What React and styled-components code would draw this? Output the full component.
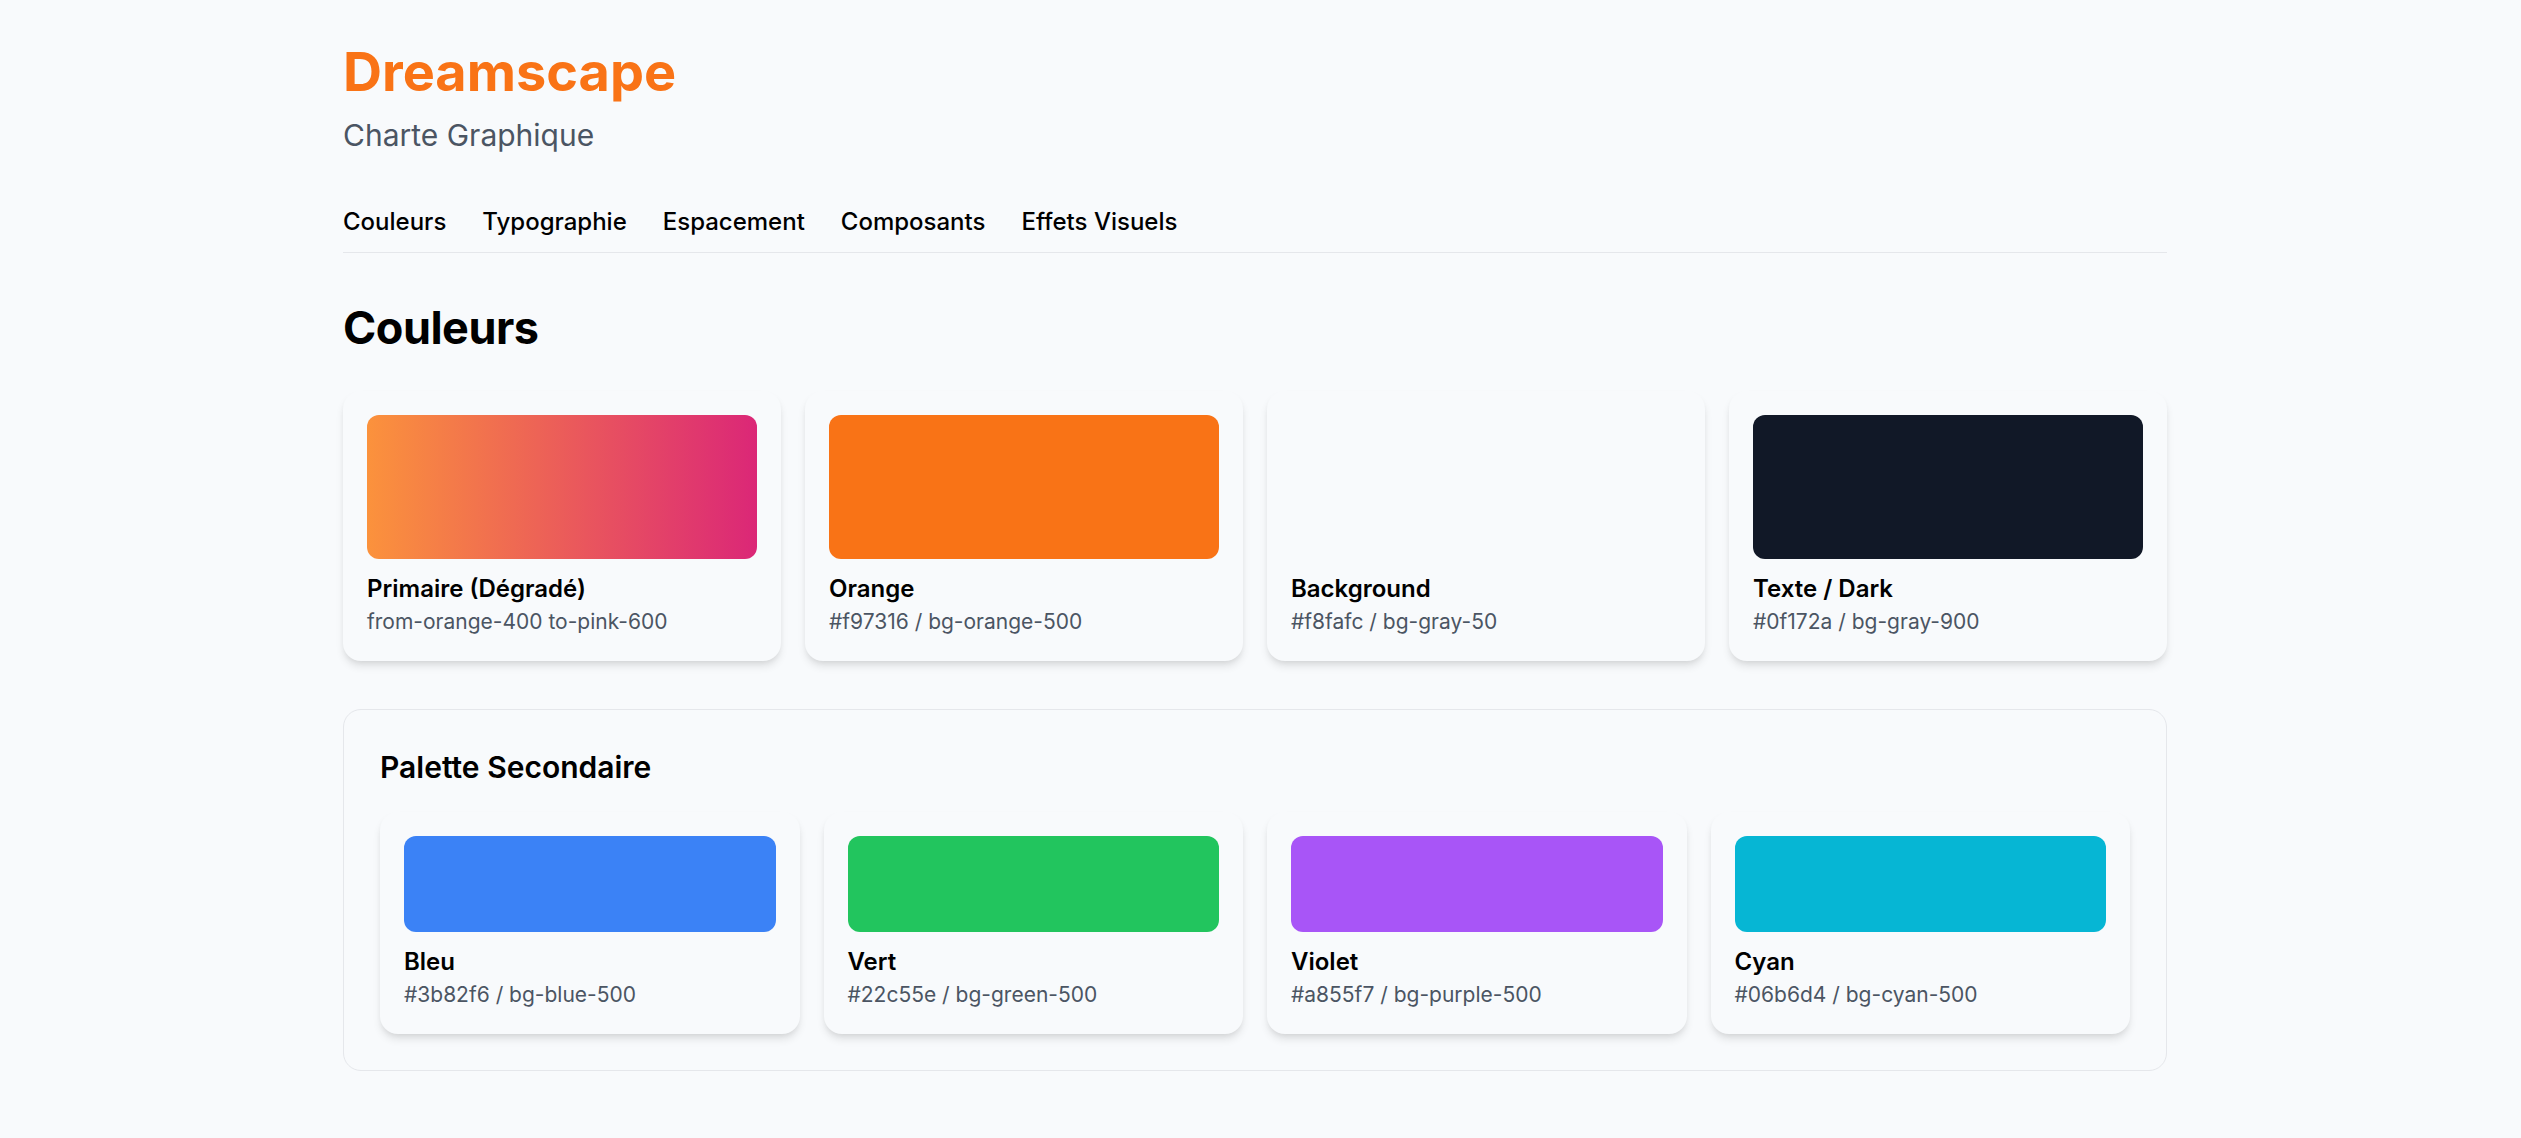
import React from 'react'
import styled, { createGlobalStyle } from 'styled-components'

const GlobalStyle = createGlobalStyle`
  body { margin: 0; background: #f8fafc; font-family: Inter, "Noto Sans", sans-serif; color: #0b0b0f; }
  * { box-sizing: border-box; }
`

const Page = styled.div`min-height: 1138px; padding: 42px 11px 60px 0;`
const Container = styled.div`width: 1824px; margin: 0 auto;`

const Header = styled.header`margin-bottom: 48px;`
const Brand = styled.h1`margin: 0; font-size: 54px; line-height: 60px; font-weight: 700; color: #f97316;`
const Subtitle = styled.p`margin: 12px 0 0; font-size: 30px; line-height: 42px; color: #4b5563;`

const Nav = styled.nav`display: flex; gap: 36px; padding-bottom: 12px; border-bottom: 1.5px solid #e5e7eb;`
const NavItem = styled.a`font-size: 24px; line-height: 36px; font-weight: 500; color: #000; text-decoration: none; cursor: pointer;`

const Section = styled.section`margin-top: 48px;`
const SectionTitle = styled.h2`margin: 0 0 36px; font-size: 45px; line-height: 54px; font-weight: 700; letter-spacing: -0.5px; color: #000;`

const Grid = styled.div`display: grid; grid-template-columns: repeat(4, 1fr); gap: 24px;`

const Card = styled.div`
  background: #f8fafc; border-radius: 18px; padding: 24px;
  box-shadow: 0 6px 9px -1.5px rgba(0,0,0,0.1), 0 3px 6px -3px rgba(0,0,0,0.1);
`
const Swatch = styled.div`height: ${p => p.$h}px; border-radius: 12px; background: ${p => p.$bg}; margin-bottom: 12px;`
const Label = styled.div`font-size: 24px; line-height: 36px; font-weight: 600; color: #000;`
const Code = styled.div`font-size: 21px; line-height: 30px; color: #4b5563;`

const Panel = styled.div`margin-top: 48px; border: 1.5px solid #e5e7eb; border-radius: 18px; padding: 36px;`
const PanelTitle = styled.h3`margin: 0 0 24px; font-size: 30px; line-height: 42px; font-weight: 600; color: #000;`

const primary = [
  { name: 'Primaire (Dégradé)', code: 'from-orange-400 to-pink-600', bg: 'linear-gradient(to right, #fb923c, #db2777)' },
  { name: 'Orange', code: '#f97316 / bg-orange-500', bg: '#f97316' },
  { name: 'Background', code: '#f8fafc / bg-gray-50', bg: '#f8fafc' },
  { name: 'Texte / Dark', code: '#0f172a / bg-gray-900', bg: '#111827' },
]

const secondary = [
  { name: 'Bleu', code: '#3b82f6 / bg-blue-500', bg: '#3b82f6' },
  { name: 'Vert', code: '#22c55e / bg-green-500', bg: '#22c55e' },
  { name: 'Violet', code: '#a855f7 / bg-purple-500', bg: '#a855f7' },
  { name: 'Cyan', code: '#06b6d4 / bg-cyan-500', bg: '#06b6d4' },
]

const ColorCard = ({ c, h }) => (
  <Card>
    <Swatch $bg={c.bg} $h={h} />
    <Label>{c.name}</Label>
    <Code>{c.code}</Code>
  </Card>
)

const App = () => {
  const tabs = ['Couleurs', 'Typographie', 'Espacement', 'Composants', 'Effets Visuels']
  return (
    <Page>
      <GlobalStyle />
      <Container>
        <Header>
          <Brand>Dreamscape</Brand>
          <Subtitle>Charte Graphique</Subtitle>
        </Header>
        <Nav>
          {tabs.map(t => <NavItem key={t}>{t}</NavItem>)}
        </Nav>
        <Section>
          <SectionTitle>Couleurs</SectionTitle>
          <Grid>
            {primary.map(c => <ColorCard key={c.name} c={c} h={144} />)}
          </Grid>
          <Panel>
            <PanelTitle>Palette Secondaire</PanelTitle>
            <Grid>
              {secondary.map(c => <ColorCard key={c.name} c={c} h={96} />)}
            </Grid>
          </Panel>
        </Section>
      </Container>
    </Page>
  )
}

export default App
